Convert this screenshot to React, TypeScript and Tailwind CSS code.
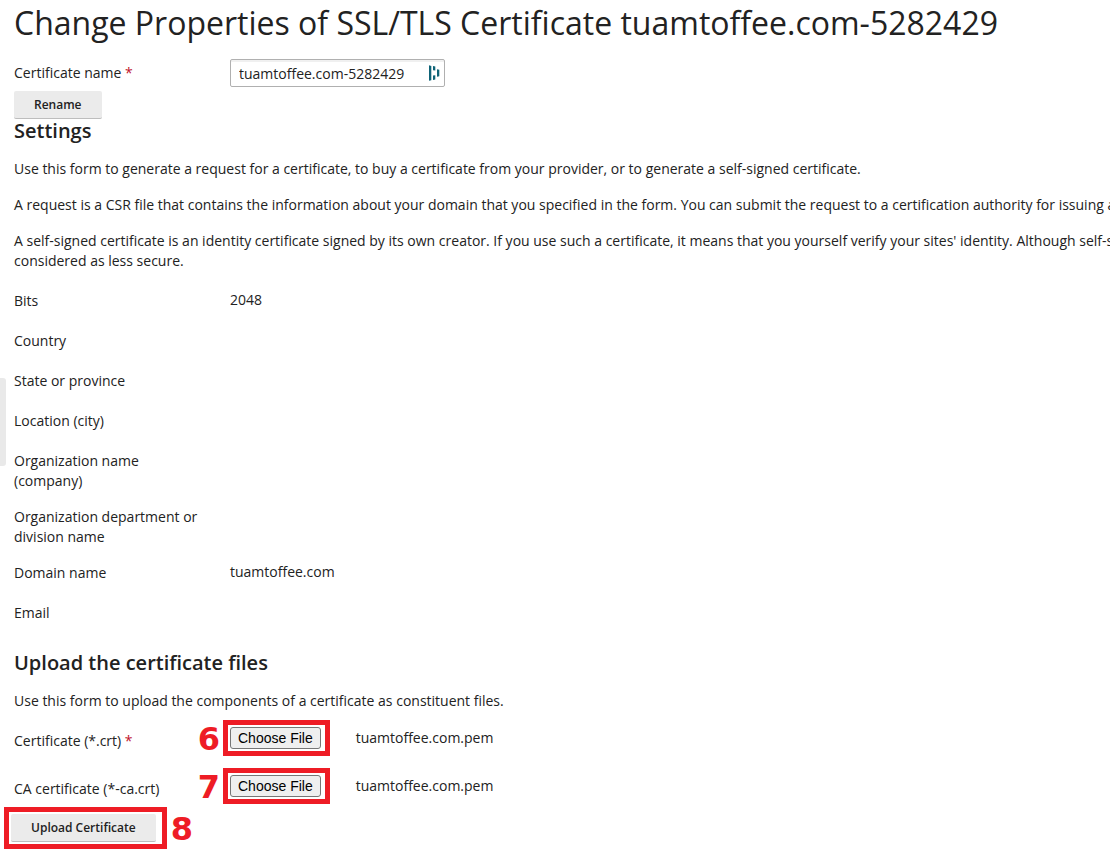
import { useRef, useState } from "react";
import type { ReactNode } from "react";

type FieldRowProps = {
    label: string;
    htmlFor?: string;
    required?: boolean;
    children?: ReactNode;
};

const FieldRow: React.FC<FieldRowProps> = ({ label, htmlFor, required, children }) => {
    const text = (
        <>
            {label}
            {required && <span className="text-[#c0132b]"> *</span>}
        </>
    );

    return (
        <div className="flex min-h-7 items-start">
            <div className="w-[216px] shrink-0 pt-1 pr-7">
                {htmlFor ? <label htmlFor={htmlFor}>{text}</label> : text}
            </div>
            {children}
        </div>
    );
};

type FileFieldProps = {
    id: string;
    label: string;
    step: string;
    required?: boolean;
};

const FileField: React.FC<FileFieldProps> = ({ id, label, step, required }) => {
    const inputRef = useRef<HTMLInputElement>(null);
    const [fileName, setFileName] = useState("tuamtoffee.com.pem");

    return (
        <FieldRow label={label} htmlFor={id} required={required}>
            <div className="relative">
                <input
                    ref={inputRef}
                    id={id}
                    type="file"
                    className="sr-only"
                    tabIndex={-1}
                    onChange={(e) => setFileName(e.target.files?.[0]?.name ?? "")}
                />
                <button
                    type="button"
                    onClick={() => inputRef.current?.click()}
                    className="block h-[22px] rounded-[3px] border border-[#767676] bg-[#efefef] px-[7px] font-['Liberation_Sans',sans-serif] text-sm leading-5 text-black"
                >
                    Choose File
                </button>
                <Callout step={step} side="left" />
            </div>
            <span className="pt-px pl-[35px]">{fileName}</span>
        </FieldRow>
    );
};

type CalloutProps = {
    step: string;
    side: "left" | "right";
};

// Red frame and step number drawn around a control
const Callout: React.FC<CalloutProps> = ({ step, side }) => (
    <span
        className={`pointer-events-none absolute -inset-y-[7px] -left-[7px] border-[5px] border-[#ee1c25] ${side === "left" ? "-right-[9px]" : "-right-[11px]"}`}
    >
        <span
            className={`absolute top-1/2 -translate-y-1/2 pt-0.5 font-['DejaVu_Sans',sans-serif] text-[32px] leading-8 font-bold text-[#ee1c25] ${side === "left" ? "right-full mr-2" : "left-full ml-[9px]"}`}
        >
            {step}
        </span>
    </span>
);

const FillIcon = () => (
    <svg viewBox="0 0 12 16" className="pointer-events-none absolute top-[6px] right-[5px] h-4 w-3" fill="#0e6377" aria-hidden="true">
        <path d="M1 0.3l2.3 0.6v14.4l-2.3 0.5z" />
        <path d="M5 1l2.3 0.6v4l-2.3-0.3zM5 10.6l2.3-0.4v4.2l-2.3 0.6zM9 4.2l2.3 0.6v6.4l-2.3 0.6z" />
    </svg>
);

const details = [
    { label: "Bits", value: "2048" },
    { label: "Country", value: "" },
    { label: "State or province", value: "" },
    { label: "Location (city)", value: "" },
    { label: "Organization name (company)", value: "" },
    { label: "Organization department or division name", value: "" },
    { label: "Domain name", value: "tuamtoffee.com" },
    { label: "Email", value: "" },
];

const buttonClass =
    "h-7 rounded-[2px] border-b border-[#bdbdbd] bg-[#ebebeb] px-5 text-xs font-semibold text-[#222]";

const App = () => {
    return (
        <div className="relative min-h-screen bg-white font-['Open_Sans',sans-serif] text-sm leading-5 text-[#222]">
            <div className="absolute top-[378px] left-0 h-[88px] w-[6px] rounded-r-[3px] bg-[#e9e9e9]" />

            <main className="mr-[9px] overflow-hidden pt-[3px] pb-3 pl-[14px]">
                <h1 className="text-[32px] leading-10 whitespace-nowrap">
                    Change Properties of SSL/TLS Certificate tuamtoffee.com-5282429
                </h1>

                <form className="mt-4" onSubmit={(e) => e.preventDefault()}>
                    <FieldRow label="Certificate name" htmlFor="cert-name" required>
                        <div className="relative">
                            <input
                                id="cert-name"
                                type="text"
                                defaultValue="tuamtoffee.com-5282429"
                                className="block h-7 w-[215px] rounded-[2px] border border-[#b0b0b0] bg-white pt-px pr-7 pl-2 shadow-[inset_0_2px_0_#f0f0f0] outline-none"
                            />
                            <FillIcon />
                        </div>
                    </FieldRow>
                    <button type="submit" className={`mt-1 block ${buttonClass}`}>
                        Rename
                    </button>
                </form>

                <section>
                    <h2 className="text-xl leading-6 font-semibold">Settings</h2>
                    <div className="mt-4 space-y-4 whitespace-nowrap">
                        <p>
                            Use this form to generate a request for a certificate, to buy a certificate from your
                            provider, or to generate a self-signed certificate.
                        </p>
                        <p>
                            A request is a CSR file that contains the information about your domain that you specified in
                            the form. You can submit the request to a certification authority for issuing a
                        </p>
                        <p>
                            A self-signed certificate is an identity certificate signed by its own creator. If you use
                            such a certificate, it means that you yourself verify your sites' identity. Although self-s
                            <br />
                            considered as less secure.
                        </p>
                    </div>
                    <div className="mt-4 space-y-3">
                        {details.map((item) => (
                            <FieldRow key={item.label} label={item.label}>
                                <span className="pt-[3px]">{item.value}</span>
                            </FieldRow>
                        ))}
                    </div>
                </section>

                <section className="mt-6">
                    <h2 className="text-xl leading-6 font-semibold">Upload the certificate files</h2>
                    <p className="mt-4">Use this form to upload the components of a certificate as constituent files.</p>
                    <form className="mt-4" onSubmit={(e) => e.preventDefault()}>
                        <div className="space-y-5">
                            <FileField id="cert-file" label="Certificate (*.crt)" step="6" required />
                            <FileField id="ca-file" label="CA certificate (*-ca.crt)" step="7" />
                        </div>
                        <div className="relative mt-[11px] -ml-[3px] w-fit">
                            <button type="submit" className={`block ${buttonClass}`}>
                                Upload Certificate
                            </button>
                            <Callout step="8" side="right" />
                        </div>
                    </form>
                </section>
            </main>
        </div>
    );
};

export default App;
